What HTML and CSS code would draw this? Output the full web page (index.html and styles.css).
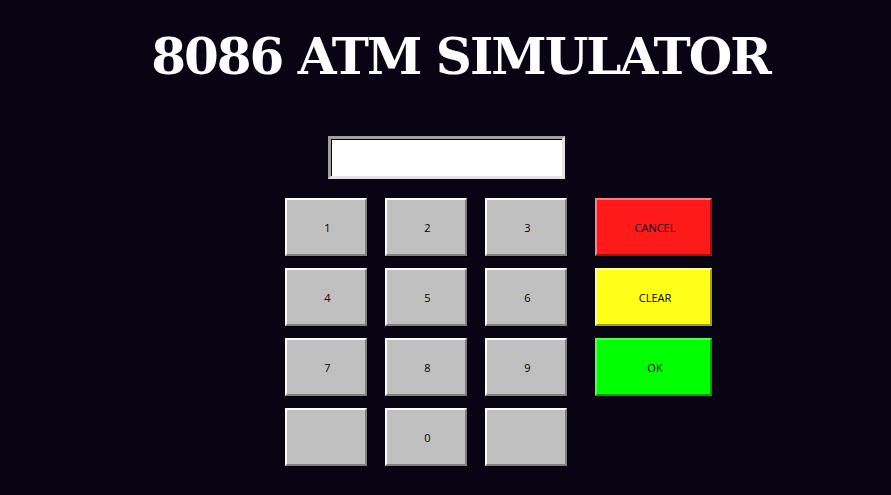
FILE: index.html
```html
<!DOCTYPE html>
<html>
<head>
<meta charset="utf-8">
<link rel="stylesheet" href="styles.css">
</head>
<body>
<div class="page">
  <h1 class="title">8086 ATM SIMULATOR</h1>
  <div class="display-row">
    <input class="display" type="text">
  </div>
  <div class="pad-row">
    <div class="keypad">
      <button class="key">1</button>
      <button class="key">2</button>
      <button class="key">3</button>
      <button class="key">4</button>
      <button class="key">5</button>
      <button class="key">6</button>
      <button class="key">7</button>
      <button class="key">8</button>
      <button class="key">9</button>
      <button class="key"></button>
      <button class="key">0</button>
      <button class="key"></button>
    </div>
    <div class="actions">
      <button class="key action cancel">CANCEL</button>
      <button class="key action clear">CLEAR</button>
      <button class="key action ok">OK</button>
    </div>
  </div>
</div>
</body>
</html>
```
FILE: styles.css
```css
html, body {
  margin: 0;
  padding: 0;
  background: #080414;
  height: 100%;
  overflow: hidden;
}
.page {
  display: flex;
  flex-direction: column;
}
.title {
  margin: 0;
  padding: 22px 0 0 30px;
  text-align: center;
  font-family: "DejaVu Serif", serif;
  font-weight: bold;
  font-size: 50px;
  letter-spacing: -2px;
  line-height: 70px;
  color: #ffffff;
}
.display-row {
  display: flex;
  justify-content: center;
  padding: 44px 0 0 1px;
}
.display {
  box-sizing: border-box;
  width: 237px;
  height: 43px;
  margin: 0;
  padding: 0;
  background: #ffffff;
  border-style: solid;
  border-width: 3px;
  border-color: #a0a0a0 #e3e3e3 #e3e3e3 #a0a0a0;
  box-shadow: inset 1px 1px 0 #000000;
  outline: none;
}
.pad-row {
  display: flex;
  padding: 19px 0 0 285px;
  gap: 28px;
}
.keypad {
  display: grid;
  grid-template-columns: repeat(3, 82px);
  grid-auto-rows: 58px;
  column-gap: 18px;
  row-gap: 12px;
}
.actions {
  display: flex;
  flex-direction: column;
  gap: 12px;
}
.key {
  box-sizing: border-box;
  width: 82px;
  height: 58px;
  margin: 0;
  padding: 0 0 0 3px;
  background: #c0c0c0;
  border-style: solid;
  border-width: 2px;
  border-color: #ffffff #808080 #808080 #ffffff;
  box-shadow: 1px 1px 0 #000000;
  font-family: "Open Sans", "Noto Sans", sans-serif;
  font-size: 11px;
  color: #000000;
  cursor: pointer;
}
.action {
  width: 117px;
}
.cancel {
  background: #ff1a1a;
  border-color: #ff8080 #a01010 #a01010 #ff8080;
}
.clear {
  background: #ffff1a;
  border-color: #ffff90 #a0a010 #a0a010 #ffff90;
}
.ok {
  background: #00ff00;
  border-color: #50ff50 #00a000 #00a000 #50ff50;
}
```
